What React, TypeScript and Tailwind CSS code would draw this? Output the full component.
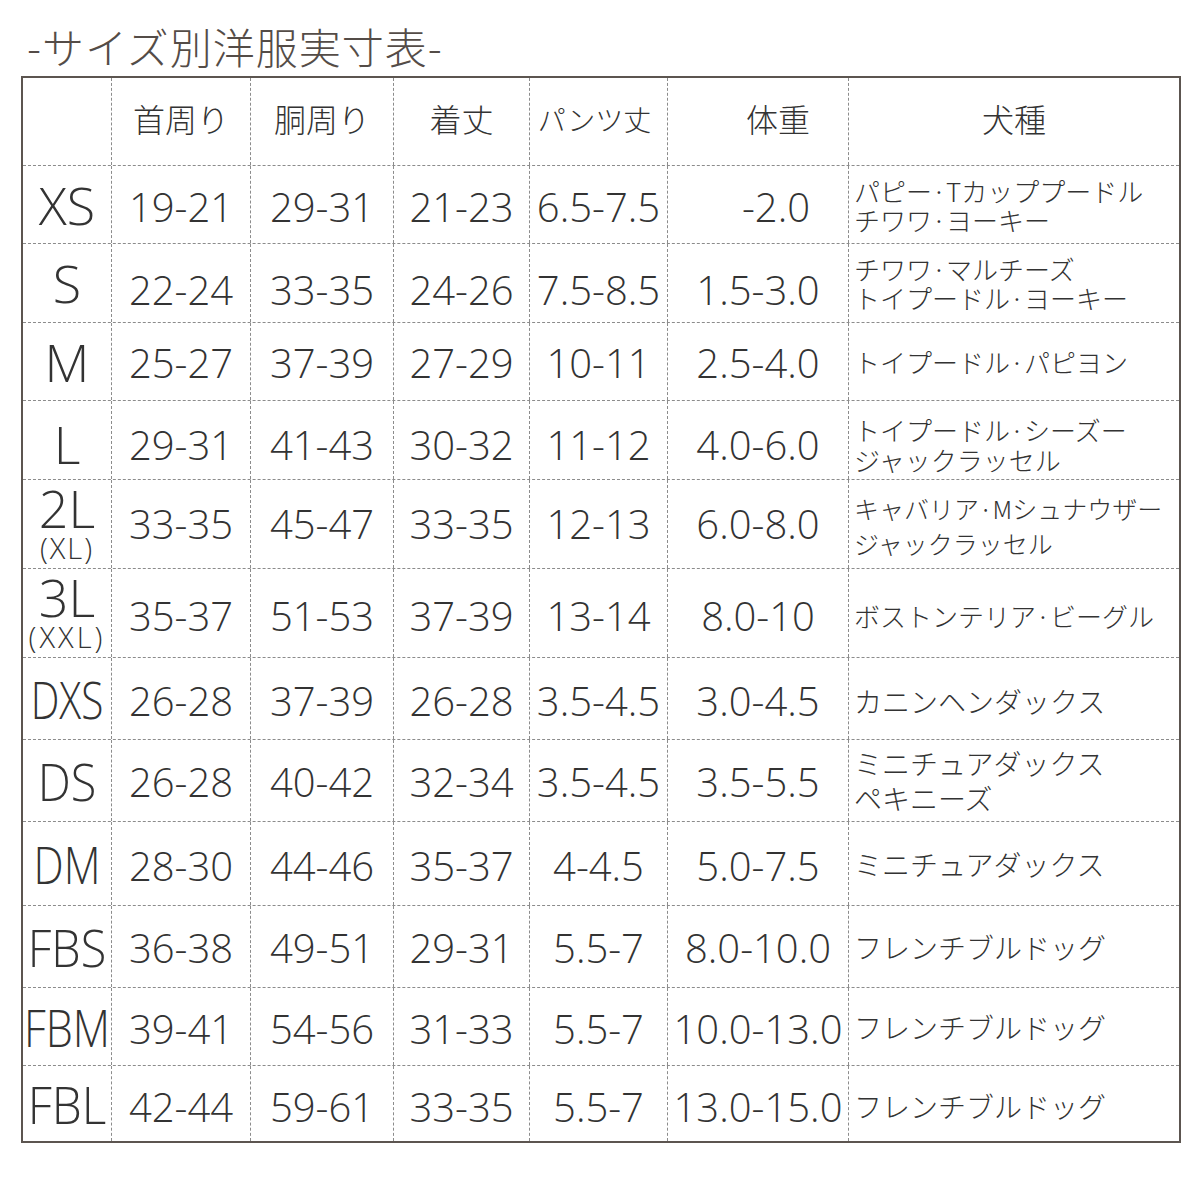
import React from 'react';

type Row = {
  size: React.ReactNode;
  sizeClass: string;
  height: string;
  nums: string[];
  numPad: string;
  weight: string;
  weightPad?: string;
  breed: string[];
  breedClass: string;
};

const cols = 'grid grid-cols-[88px_139px_143px_136px_138px_181px_331px]';
const num = "font-['Open_Sans',sans-serif] font-light text-[40px] leading-none text-[#333]";
const jp = "font-['Noto_Sans_CJK_JP',sans-serif] font-light text-[#333]";

const rows: Row[] = [
  { size: 'XS', sizeClass: '', height: 'h-[78px]', nums: ['19-21', '29-31', '21-23', '6.5-7.5'], numPad: 'pt-[4px]', weight: '-2.0', weightPad: 'pl-[36px]', breed: ['パピー·Tカッププードル', 'チワワ·ヨーキー'], breedClass: 'text-[26px] leading-[29px]' },
  { size: 'S', sizeClass: '', height: 'h-[79px]', nums: ['22-24', '33-35', '24-26', '7.5-8.5'], numPad: 'pt-[14px]', weight: '1.5-3.0', breed: ['チワワ·マルチーズ', 'トイプードル·ヨーキー'], breedClass: 'text-[26px] leading-[29px]' },
  { size: 'M', sizeClass: '', height: 'h-[78px]', nums: ['25-27', '37-39', '27-29', '10-11'], numPad: 'pt-[2px]', weight: '2.5-4.0', breed: ['トイプードル·パピヨン'], breedClass: 'text-[26px] leading-[30px]' },
  { size: 'L', sizeClass: 'pt-[8px]', height: 'h-[79px]', nums: ['29-31', '41-43', '30-32', '11-12'], numPad: 'pt-[10px]', weight: '4.0-6.0', breed: ['トイプードル·シーズー', 'ジャックラッセル'], breedClass: 'text-[26px] leading-[30px] pt-[10px]' },
  {
    size: (
      <div className="flex flex-col items-center">
        <span className="leading-[48px]">2L</span>
        <span className="text-[29px] leading-[32px] tracking-[2px]">(XL)</span>
      </div>
    ),
    sizeClass: '', height: 'h-[89px]', nums: ['33-35', '45-47', '33-35', '12-13'], numPad: '', weight: '6.0-8.0',
    breed: ['キャバリア·Mシュナウザー', 'ジャックラッセル'], breedClass: 'text-[25px] leading-[35px] pt-[4px]',
  },
  {
    size: (
      <div className="flex flex-col items-center">
        <span className="leading-[48px]">3L</span>
        <span className="text-[29px] leading-[32px] tracking-[3px]">(XXL)</span>
      </div>
    ),
    sizeClass: '', height: 'h-[89px]', nums: ['35-37', '51-53', '37-39', '13-14'], numPad: 'pt-[6px]', weight: '8.0-10',
    breed: ['ボストンテリア·ビーグル'], breedClass: 'text-[26px] leading-[30px] pt-[6px]',
  },
  { size: 'DXS', sizeClass: 'scale-x-[0.78]', height: 'h-[82px]', nums: ['26-28', '37-39', '26-28', '3.5-4.5'], numPad: 'pt-[4px]', weight: '3.0-4.5', breed: ['カニンヘンダックス'], breedClass: 'text-[28px] leading-[30px] pt-[4px]' },
  { size: 'DS', sizeClass: 'scale-x-[0.9]', height: 'h-[82px]', nums: ['26-28', '40-42', '32-34', '3.5-4.5'], numPad: 'pt-[2px]', weight: '3.5-5.5', breed: ['ミニチュアダックス', 'ペキニーズ'], breedClass: 'text-[28px] leading-[35px]' },
  { size: 'DM', sizeClass: 'scale-x-[0.82]', height: 'h-[84px]', nums: ['28-30', '44-46', '35-37', '4-4.5'], numPad: 'pt-[4px]', weight: '5.0-7.5', breed: ['ミニチュアダックス'], breedClass: 'text-[28px] leading-[30px]' },
  { size: 'FBS', sizeClass: 'scale-x-[0.9]', height: 'h-[82px]', nums: ['36-38', '49-51', '29-31', '5.5-7'], numPad: 'pt-[2px]', weight: '8.0-10.0', breed: ['フレンチブルドッグ'], breedClass: 'text-[28px] leading-[30px]' },
  { size: 'FBM', sizeClass: 'scale-x-[0.83]', height: 'h-[78px]', nums: ['39-41', '54-56', '31-33', '5.5-7'], numPad: 'pt-[4px]', weight: '10.0-13.0', breed: ['フレンチブルドッグ'], breedClass: 'text-[28px] leading-[30px]' },
  { size: 'FBL', sizeClass: 'scale-x-[0.92]', height: 'h-[76px]', nums: ['42-44', '59-61', '33-35', '5.5-7'], numPad: 'pt-[6px]', weight: '13.0-15.0', breed: ['フレンチブルドッグ'], breedClass: 'text-[28px] leading-[30px] pt-[4px]' },
];

const headers = ['首周り', '胴周り', '着丈'];

const cell = 'border-l border-dashed border-[#8c8c8c] flex items-center justify-center';

const App: React.FC = () => {
  return (
    <div className="w-[1200px] h-[1200px] bg-white">
      <div className={`${jp} text-[#544c47] text-[42px] leading-[42px] h-[76px] pl-[27px] pt-[25px] tracking-[1px]`}>
        -サイズ別洋服実寸表-
      </div>
      <div className="ml-[21px] w-[1160px] border-2 border-[#5c5550]">
        {/* header row */}
        <div className={`${cols} h-[87px]`}>
          <div />
          {headers.map((h) => (
            <div key={h} className={`${cell} ${jp} text-[32px] pb-[8px]`}>{h}</div>
          ))}
          <div className={`${cell} ${jp} text-[28px] pr-[8px] pb-[6px]`}>パンツ丈</div>
          <div className={`${cell} ${jp} text-[32px] pl-[40px] pb-[8px]`}>体重</div>
          <div className={`${cell} ${jp} text-[32px] pb-[8px]`}>犬種</div>
        </div>

        {rows.map((r, i) => (
          <div key={i} className={`${cols} ${r.height} border-t border-dashed border-[#8c8c8c]`}>
            <div className={`flex items-center justify-center font-['Open_Sans',sans-serif] font-light text-[52px] leading-none text-[#333] ${r.sizeClass}`}>
              {r.size}
            </div>
            {r.nums.map((n, j) => (
              <div key={j} className={`${cell} ${num} ${r.numPad} whitespace-nowrap`}>{n}</div>
            ))}
            <div className={`${cell} ${num} ${r.numPad} ${r.weightPad ?? ''} whitespace-nowrap`}>{r.weight}</div>
            <div className="border-l border-dashed border-[#8c8c8c] flex items-center pl-[5px]">
              <div className={`${jp} ${r.breedClass} whitespace-nowrap`}>
                {r.breed.map((b) => (
                  <div key={b}>{b}</div>
                ))}
              </div>
            </div>
          </div>
        ))}
      </div>
    </div>
  );
};

export default App;
